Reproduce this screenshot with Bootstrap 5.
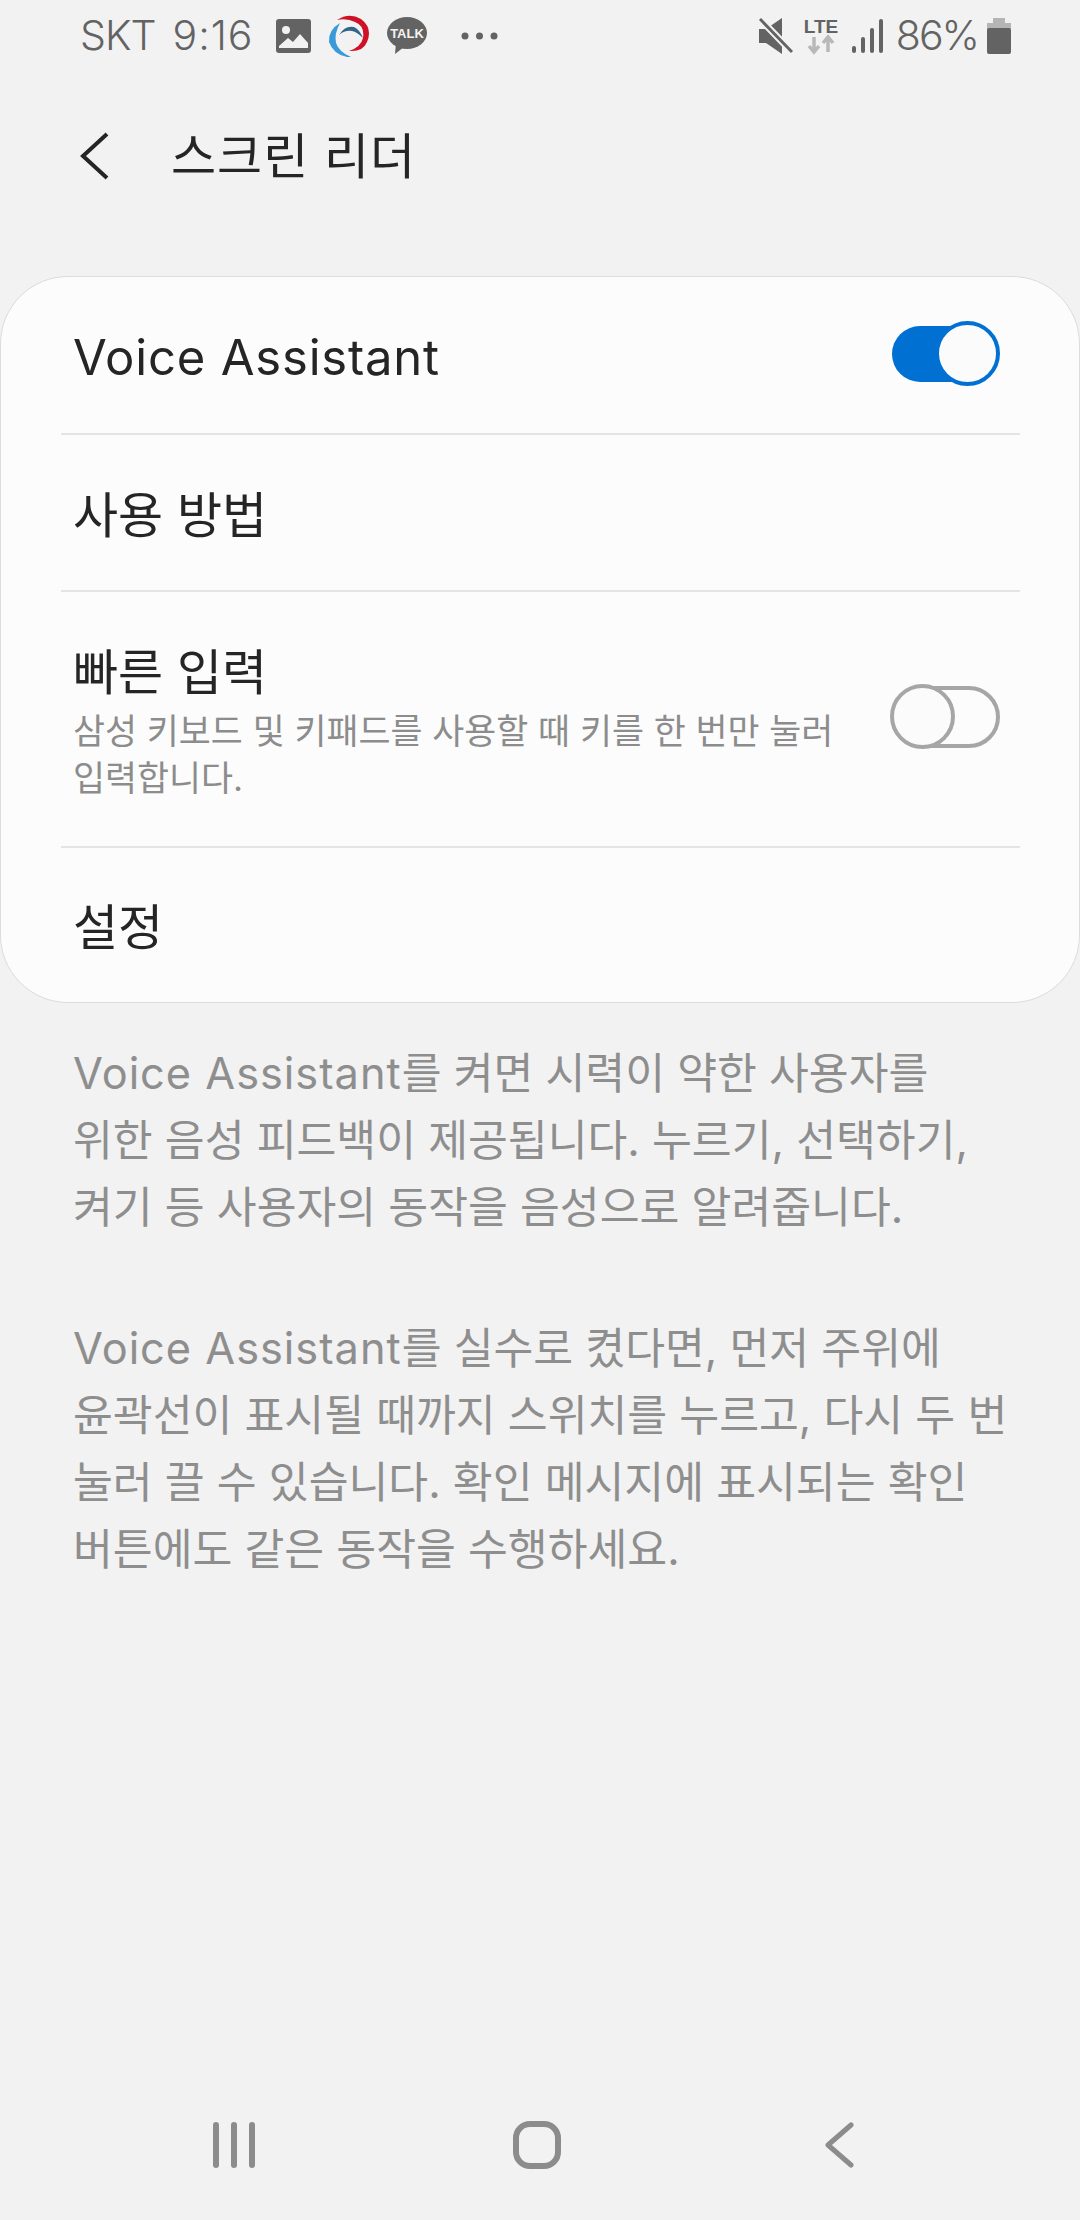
<!DOCTYPE html>
<html lang="ko">
<head>
  <meta charset="UTF-8" />
  <meta name="viewport" content="width=device-width, initial-scale=1.0"/>
  <title>스크린 리더</title>
  <link href="https://cdn.jsdelivr.net/npm/bootstrap@5.3.2/dist/css/bootstrap.min.css" rel="stylesheet"/>
  <style>
    body {
      background: #f2f2f2;
      font-family: Inter, "Noto Sans CJK KR", sans-serif;
      width: 1080px;
      height: 2220px;
      overflow: hidden;
    }
    .screen { height: 2220px; }
    .status-bar { height: 72px; padding: 0 69px 0 80px; color: #636363; font-size: 41px; font-weight: 300; }
    .status-bar svg { display: block; }
    .carrier-text { letter-spacing: -1px; }
    .time-text { margin-left: 17px; letter-spacing: 1px; }
    .batt-text { margin-left: 12px; letter-spacing: -2px; }
    .gap-photo { margin-left: 22px; }
    .gap-logo { margin-left: 16px; }
    .gap-talk { margin-left: 16px; }
    .gap-dots { margin-left: 34px; }
    .gap-lte { margin-left: 9px; }
    .gap-signal { margin-left: 12px; }
    .gap-batt { margin-left: 9px; }
    .app-header { height: 204px; padding: 0 0 36px 80px; }
    .app-title { font-size: 49px; color: #252525; margin-left: 61px; letter-spacing: 1px; padding-top: 2px; }
    .settings-card { background: #fcfcfc; border: 1px solid #dcdcdc; border-radius: 68px; height: 727px; }
    .setting-row { margin: 0 59px 0 60px; padding: 0 20px 0 12px; border-bottom: 2px solid #e4e4e4; }
    .setting-row:last-child { border-bottom: 0; }
    .row-voice { height: 158px; }
    .row-how { height: 157px; }
    .row-quick { height: 256px; }
    .row-settings { height: 154px; }
    .row-label { font-size: 49px; color: #252525; line-height: 1.2; }
    .label-latin { letter-spacing: .8px; }
    .label-nudge { padding-top: 7px; }
    .row-sub { font-size: 34.8px; line-height: 47px; color: #8c8c8c; margin-top: 6px; }
    .quick-text { padding-top: 8px; }
    .toggle-track { width: 106px; height: 56px; border-radius: 28px; position: relative; flex-shrink: 0; }
    .toggle-track.on { background: #0070d2; margin-bottom: 3px; margin-right: 2px; }
    .toggle-track.off { height: 62px; border-radius: 31px; border: 4px solid #a6a6a6; margin-bottom: 4px; }
    .toggle-knob { width: 65px; height: 65px; border-radius: 50%; background: #fbfbfb; position: absolute; }
    .toggle-track.on .toggle-knob { right: -2px; top: -5px; border: 4px solid #0070d2; }
    .toggle-track.off .toggle-knob { left: -8px; top: -6px; border: 4px solid #a6a6a6; }
    .help-text { padding: 37px 30px 0 73px; font-size: 43.3px; line-height: 67px; color: #8e8e8e; }
    .help-text p { margin: 0 0 74px; }
    .help-latin { letter-spacing: 1px; }
    .nav-bar { height: 150px; padding-left: 213px; }
    .nav-home { margin-left: 256px; }
    .nav-back { margin-left: 264px; }
  </style>
</head>
<body>
  <div class="screen d-flex flex-column">

    <!-- Status bar -->
    <div class="status-bar d-flex align-items-center justify-content-between">
      <div class="d-flex align-items-center">
        <span class="carrier-text">SKT</span>
        <span class="time-text">9:16</span>
        <svg class="gap-photo" width="35" height="34" viewBox="0 0 35 34"><rect width="35" height="34" rx="3" fill="#636363"/><circle cx="10" cy="11" r="4" fill="#f2f2f2"/><path d="M3 27l9-8 5 4 7-8 8 9v5H3z" fill="#f2f2f2"/></svg>
        <svg class="gap-logo" width="44" height="44" viewBox="0 0 44 44"><path d="M10 6Q22-2 34 5 46 14 40 28 36 38 22 37 34 33 36 24 38 12 28 8 20 4 10 6z" fill="#cf1126"/><path d="M13 9Q1 16 2 28 6 40 20 43h4Q12 38 9 29 7 20 13 9z" fill="#3a9ad9"/><path d="M12 21Q18 11 27 13 33 16 36 24 30 18 25 17 18 16 12 21z" fill="#33658a"/></svg>
        <svg class="gap-talk" width="40" height="38" viewBox="0 0 40 38"><ellipse cx="20" cy="16" rx="20" ry="16" fill="#636363"/><path d="M9 26l-1 11 9-7z" fill="#636363"/><text x="20" y="21" text-anchor="middle" font-family="Liberation Sans" font-size="13" font-weight="700" fill="#f2f2f2">TALK</text></svg>
        <svg class="gap-dots" width="37" height="8" viewBox="0 0 37 8" fill="#636363"><circle cx="4" cy="4" r="3.5"/><circle cx="18.5" cy="4" r="3.5"/><circle cx="33" cy="4" r="3.5"/></svg>
      </div>
      <div class="d-flex align-items-center">
        <svg width="34" height="36" viewBox="0 0 34 36"><path d="M0 11h7L23 0v36L7 25H0z" fill="#636363"/><path d="M1 1l32 33" stroke="#f2f2f2" stroke-width="7"/><path d="M1 1l32 33" stroke="#636363" stroke-width="3"/></svg>
        <svg class="gap-lte" width="38" height="38" viewBox="0 0 38 38"><text x="19" y="16" text-anchor="middle" font-family="Liberation Sans" font-size="19" font-weight="700" fill="#636363">LTE</text><path d="M12 20v14M7 29l5 6 5-6M26 35V21M21 26l5-6 5 6" fill="none" stroke="#b8b8b8" stroke-width="3.5"/></svg>
        <svg class="gap-signal" width="32" height="34" viewBox="0 0 32 34" fill="#636363"><rect x="0" y="27" width="4" height="7" rx="2"/><rect x="9" y="18" width="4" height="16" rx="2"/><rect x="18" y="9" width="4" height="25" rx="2"/><rect x="27" y="0" width="4" height="34" rx="2"/></svg>
        <span class="batt-text">86%</span>
        <svg class="gap-batt" width="24" height="36" viewBox="0 0 24 36"><rect x="6" y="0" width="12" height="6" fill="#b5b5b5"/><rect x="0" y="5" width="24" height="6" fill="#b5b5b5"/><rect x="0" y="10" width="24" height="26" rx="2" fill="#636363"/></svg>
      </div>
    </div>

    <!-- Header -->
    <div class="app-header d-flex align-items-center">
      <svg width="30" height="48" viewBox="0 0 30 48" fill="none"><path d="M27 2L3 24l24 22" stroke="#252525" stroke-width="4"/></svg>
      <span class="app-title">스크린 리더</span>
    </div>

    <!-- Settings -->
    <div class="settings-card">
      <div class="setting-row row-voice d-flex align-items-center justify-content-between">
        <span class="row-label label-latin label-nudge">Voice Assistant</span>
        <div class="toggle-track on"><div class="toggle-knob"></div></div>
      </div>
      <div class="setting-row row-how d-flex align-items-center">
        <span class="row-label label-nudge">사용 방법</span>
      </div>
      <div class="setting-row row-quick d-flex align-items-center justify-content-between">
        <div class="quick-text">
          <div class="row-label">빠른 입력</div>
          <div class="row-sub">삼성 키보드 및 키패드를 사용할 때 키를 한 번만 눌러<br>입력합니다.</div>
        </div>
        <div class="toggle-track off"><div class="toggle-knob"></div></div>
      </div>
      <div class="setting-row row-settings d-flex align-items-center">
        <span class="row-label label-nudge">설정</span>
      </div>
    </div>

    <!-- Help text -->
    <div class="help-text">
      <p><span class="help-latin">Voice Assistant</span>를 켜면 시력이 약한 사용자를<br>위한 음성 피드백이 제공됩니다. 누르기, 선택하기,<br>켜기 등 사용자의 동작을 음성으로 알려줍니다.</p>
      <p><span class="help-latin">Voice Assistant</span>를 실수로 켰다면, 먼저 주위에<br>윤곽선이 표시될 때까지 스위치를 누르고, 다시 두 번<br>눌러 끌 수 있습니다. 확인 메시지에 표시되는 확인<br>버튼에도 같은 동작을 수행하세요.</p>
    </div>

    <!-- Nav bar -->
    <div class="nav-bar mt-auto d-flex align-items-center">
      <svg width="44" height="46" viewBox="0 0 44 46" fill="#8c8c8c"><rect x="0" y="0" width="6" height="46" rx="3"/><rect x="18" y="0" width="6" height="46" rx="3"/><rect x="36" y="0" width="6" height="46" rx="3"/></svg>
      <svg class="nav-home" width="48" height="48" viewBox="0 0 48 48" fill="none"><rect x="3" y="3" width="42" height="42" rx="14" stroke="#8c8c8c" stroke-width="6"/></svg>
      <svg class="nav-back" width="29" height="46" viewBox="0 0 29 46" fill="none"><path d="M26 3L3 23l23 20" stroke="#8c8c8c" stroke-width="5" stroke-linecap="round" stroke-linejoin="round"/></svg>
    </div>
  </div>
</body>
</html>
